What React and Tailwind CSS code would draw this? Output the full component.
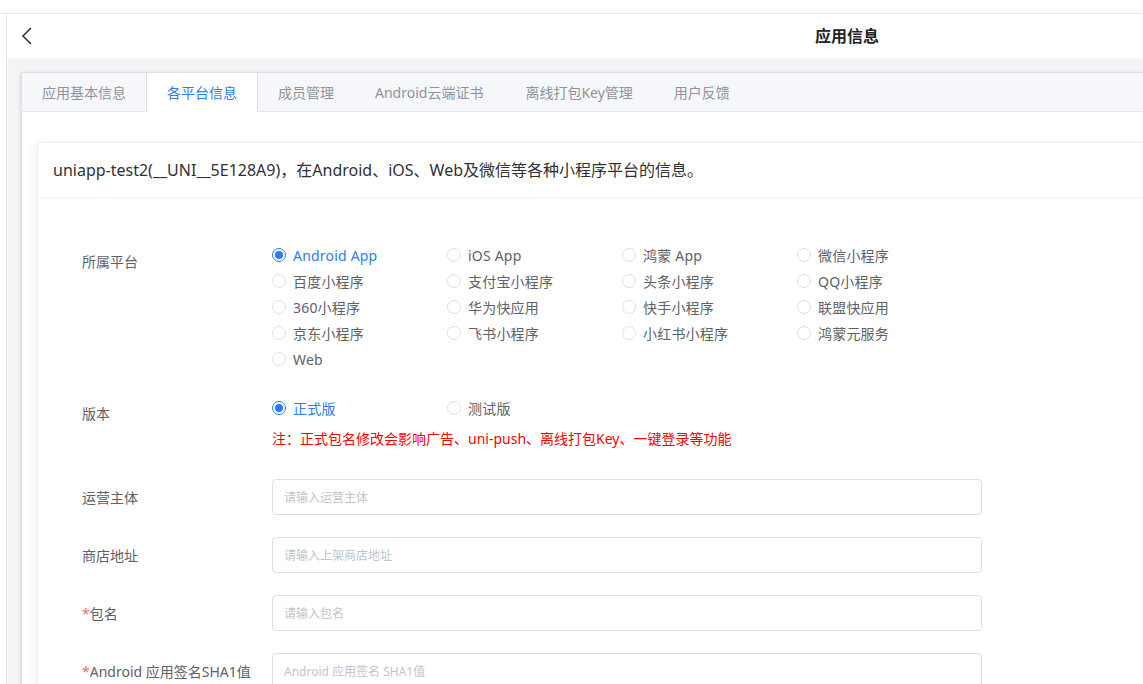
import React from 'react';

const platforms = [
  'Android App', 'iOS App', '鸿蒙 App', '微信小程序',
  '百度小程序', '支付宝小程序', '头条小程序', 'QQ小程序',
  '360小程序', '华为快应用', '快手小程序', '联盟快应用',
  '京东小程序', '飞书小程序', '小红书小程序', '鸿蒙元服务',
  'Web',
];

const tabs = [
  { t: '应用基本信息', pad: 'px-[20px]' },
  { t: '各平台信息', pad: 'px-[20px]', active: true },
  { t: '成员管理', pad: 'pl-[20px] pr-[21px]' },
  { t: 'Android云端证书', pad: 'pl-[20px] pr-[22px]' },
  { t: '离线打包Key管理', pad: 'pl-[20px] pr-[21px]' },
  { t: '用户反馈', pad: 'px-[20px]' },
];

const inputs = [
  { label: '运营主体', placeholder: '请输入运营主体' },
  { label: '商店地址', placeholder: '请输入上架商店地址' },
  { label: '包名', placeholder: '请输入包名', required: true },
  { label: 'Android 应用签名SHA1值', placeholder: 'Android 应用签名 SHA1值', required: true },
];

function Radio({ label, checked }) {
  return (
    <div className="h-[26px] w-[175px] flex items-center">
      <span
        className={
          'w-[14px] h-[14px] rounded-full border flex items-center justify-center shrink-0 ' +
          (checked ? 'border-[#2b7cf6]' : 'border-[#dcdfe6]')
        }
      >
        {checked && <span className="w-[8px] h-[8px] rounded-full bg-[#2b7cf6]" />}
      </span>
      <span className={'ml-[7px] text-[14px] tracking-[0.2px] whitespace-nowrap ' + (checked ? 'text-[#2b7cf6]' : 'text-[#606266]')}>
        {label}
      </span>
    </div>
  );
}

export default function App() {
  return (
    <div className="w-[1143px] h-[684px] overflow-hidden bg-white font-['Noto_Sans','Noto_Sans_CJK_SC',sans-serif]">
      {/* top strip */}
      <div className="h-[14px] border-b border-[#e6e6e6]" />

      <div className="flex">
        <div className="w-[7px] shrink-0 border-r border-[#e6e6e6] h-[670px]" />

        <div className="flex-1 min-w-0">
          {/* header */}
          <div className="h-[44px] flex items-center pl-[13px]">
            <svg width="14" height="20" viewBox="0 0 14 20" className="shrink-0">
              <polyline points="11,2 3,10 11,18" fill="none" stroke="#333" strokeWidth="1.6" />
            </svg>
            <div className="ml-[781px] text-[16px] font-bold text-[#222] whitespace-nowrap">应用信息</div>
          </div>

          {/* gray area */}
          <div className="bg-[#f4f4f4] pt-[14px] pl-[14px] h-[626px]">
            <div className="w-[1200px] bg-white border border-[#dcdfe6] shadow-[0_2px_4px_rgba(0,0,0,0.12),0_0_6px_rgba(0,0,0,0.04)] h-[700px]">
              {/* tabs */}
              <div className="flex h-[39px] bg-[#f5f7fa] border-b border-[#e4e7ed]">
                {tabs.map(({ t, pad, active }) =>
                  active ? (
                    <div
                      key={t}
                      className={'h-[39px] flex items-center bg-white border-x border-[#dcdfe6] text-[14px] text-[#2b7cf6] whitespace-nowrap ' + pad}
                    >
                      {t}
                    </div>
                  ) : (
                    <div key={t} className={'h-[38px] flex items-center text-[14px] text-[#909399] whitespace-nowrap ' + pad}>
                      {t}
                    </div>
                  )
                )}
              </div>

              {/* content */}
              <div className="pt-[30px] pl-[15px]">
                <div className="w-[1200px] border border-[#ebeef5] rounded-[4px] shadow-[0_2px_12px_rgba(0,0,0,0.08)] bg-white">
                  <div className="h-[55px] px-[15px] flex items-center border-b border-[#ebeef5] text-[16px] text-[#303133] whitespace-nowrap">
                    uniapp-test2(__UNI__5E128A9)，在Android、iOS、Web及微信等各种小程序平台的信息。
                  </div>

                  <div className="pt-[44px] pl-[44px] pb-[40px]">
                    {/* platform */}
                    <div className="flex">
                      <div className="w-[190px] pt-[1px] leading-[38px] text-[14px] text-[#606266]">所属平台</div>
                      <div className="grid grid-cols-4 w-[700px]">
                        {platforms.map((p, i) => (
                          <Radio key={p} label={p} checked={i === 0} />
                        ))}
                      </div>
                    </div>

                    {/* version */}
                    <div className="flex mt-[23px]">
                      <div className="w-[190px] pt-[1px] leading-[36px] text-[14px] text-[#606266]">版本</div>
                      <div>
                        <div className="flex">
                          <Radio label="正式版" checked />
                          <Radio label="测试版" />
                        </div>
                        <div className="leading-[36px] text-[14px] text-[#ff0000] whitespace-nowrap">
                          注：正式包名修改会影响广告、uni-push、离线打包Key、一键登录等功能
                        </div>
                      </div>
                    </div>

                    {inputs.map((f) => (
                      <div key={f.label} className="flex items-center mt-[22px]">
                        <div className="w-[190px] text-[14px] text-[#606266] whitespace-nowrap">
                          {f.required && <span className="text-[#f56c6c]">*</span>}
                          {f.label}
                        </div>
                        <input
                          className="w-[710px] h-[36px] border border-[#dcdfe6] rounded-[4px] px-[11px] text-[12px] text-[#606266] placeholder:text-[#c0c4cc] outline-none"
                          placeholder={f.placeholder}
                        />
                      </div>
                    ))}
                  </div>
                </div>
              </div>
            </div>
          </div>
        </div>
      </div>
    </div>
  );
}
